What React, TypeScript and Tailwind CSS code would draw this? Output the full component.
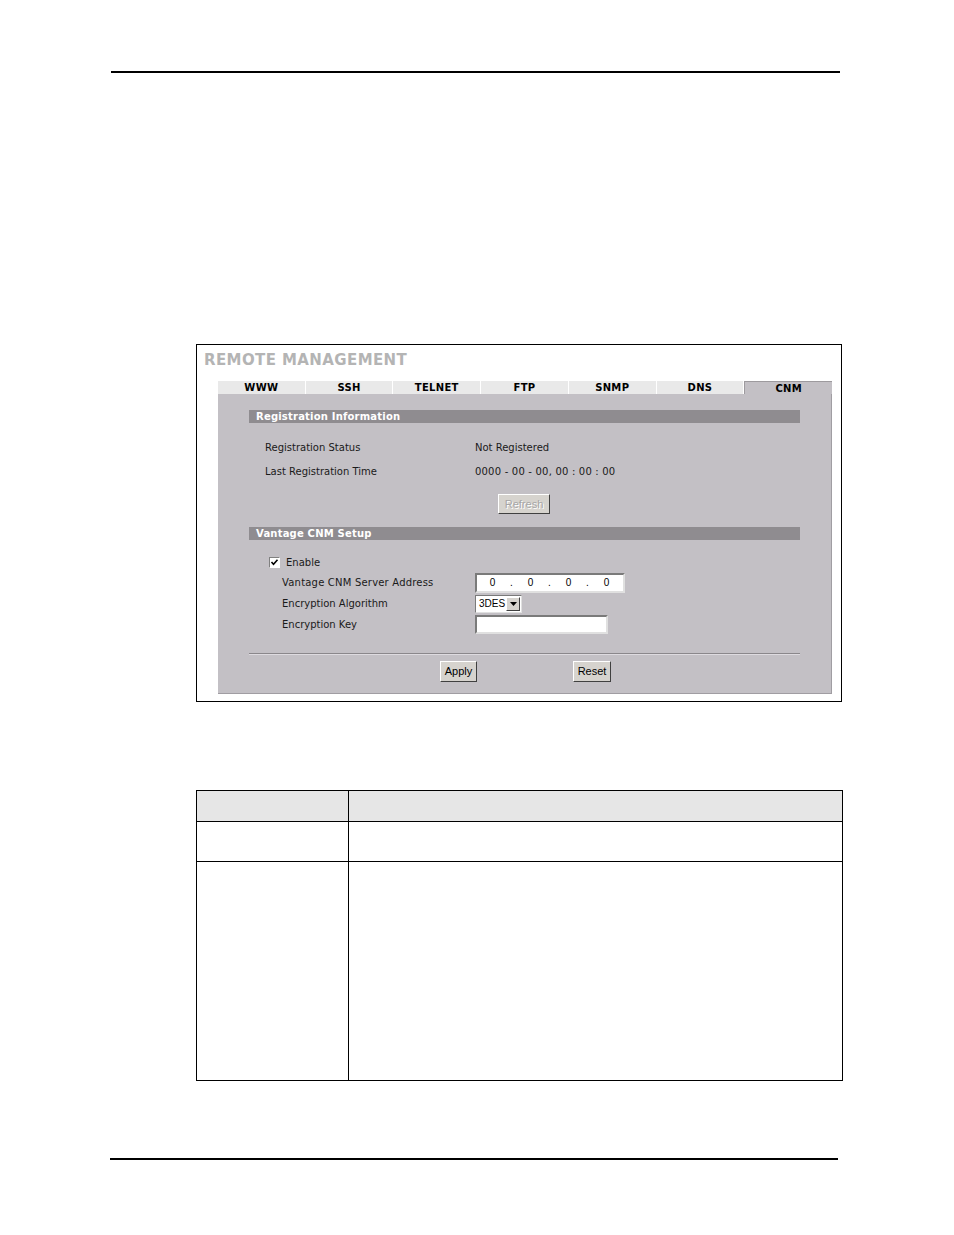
import React from "react";

const TABS = ["WWW", "SSH", "TELNET", "FTP", "SNMP", "DNS", "CNM"];
const IP_PARTS = ["0", ".", "0", ".", "0", ".", "0"];

function WinButton({ label, disabled, w }: { label: string; disabled?: boolean; w: string }) {
  return (
    <div
      className={`${w} h-full flex items-center justify-center bg-[#d6d3ce] border border-t-white border-l-white border-r-[#404040] border-b-[#404040] text-[11px] font-['Liberation_Sans',sans-serif] ${
        disabled ? "text-[#a6a6a6] [text-shadow:1px_1px_0_#ffffff]" : "text-black"
      }`}
    >
      {label}
    </div>
  );
}

function SectionBar({ title }: { title: string }) {
  return (
    <div className="h-[13px] bg-[#8f8c90] pl-[7px] flex items-center text-[10px] font-bold text-white tracking-[0.2px]">
      {title}
    </div>
  );
}

function RemoteManagement() {
  return (
    <div className="ml-[196px] mt-[271px] w-[646px] h-[358px] border border-black bg-white flex flex-col">
      <div className="h-[36px] pl-[7px] pt-[4px] text-[15px] font-bold text-[#b4b4b4] tracking-[0.4px] font-['DejaVu_Sans',sans-serif]">
        REMOTE MANAGEMENT
      </div>
      <div className="ml-[21px] mr-[9px] flex flex-col font-['DejaVu_Sans',sans-serif]">
        {/* Tabs */}
        <div className="h-[13px] flex">
          {TABS.map((t) => (
            <div
              key={t}
              className={`flex-1 flex items-center justify-center text-[10px] font-bold text-black tracking-[0.3px] border-r border-white last:border-r-0 ${
                t === "CNM" ? "bg-[#c3c0c5] border-t border-t-[#9d9a9e] border-l border-l-[#9d9a9e]" : "bg-[#e9e9e9]"
              }`}
            >
              {t}
            </div>
          ))}
        </div>
        {/* Panel */}
        <div className="h-[300px] bg-[#c3c0c5] border-r border-b border-[#a09da2] pt-[16px] px-[31px] flex flex-col text-[10px] text-[#1a1a1a]">
          <SectionBar title="Registration Information" />
          <div className="mt-[12px] h-[24px] flex items-center">
            <div className="ml-[16px] w-[210px]">Registration Status</div>
            <div>Not Registered</div>
          </div>
          <div className="h-[24px] flex items-center">
            <div className="ml-[16px] w-[210px]">Last Registration Time</div>
            <div className="tracking-[0.2px]">0000 - 00 - 00, 00 : 00 : 00</div>
          </div>
          <div className="mt-[11px] h-[20px] flex">
            <div className="ml-[249px] h-full">
              <WinButton label="Refresh" disabled w="w-[52px]" />
            </div>
          </div>
          <div className="mt-[13px]">
            <SectionBar title="Vantage CNM Setup" />
          </div>
          <div className="mt-[12px] h-[20px] flex items-center">
            <div className="ml-[20px] w-[11px] h-[11px] bg-white border border-t-[#808080] border-l-[#808080] border-r-white border-b-white flex items-center justify-center">
              <svg viewBox="0 0 9 9" className="w-[9px] h-[9px]">
                <path d="M1.5 4 L3.5 6.2 L7.5 1.8" stroke="black" strokeWidth="1.6" fill="none" />
              </svg>
            </div>
            <div className="ml-[6px]">Enable</div>
          </div>
          <div className="h-[21px] flex items-center">
            <div className="ml-[33px] w-[193px] tracking-[0.2px]">Vantage CNM Server Address</div>
            <div className="w-[150px] h-[20px] bg-white border-2 border-t-[#7a7a7a] border-l-[#7a7a7a] border-r-[#e0e0e0] border-b-[#e0e0e0] flex items-center text-[10px] font-['Liberation_Sans',sans-serif] text-black">
              <div className="ml-[6px] flex">
                {IP_PARTS.map((p, i) => (
                  <span key={i} className="w-[19px] text-center">
                    {p}
                  </span>
                ))}
              </div>
            </div>
          </div>
          <div className="h-[21px] flex items-center">
            <div className="ml-[33px] w-[193px]">Encryption Algorithm</div>
            <div className="w-[47px] h-[18px] bg-white border border-t-[#7a7a7a] border-l-[#7a7a7a] border-r-[#e0e0e0] border-b-[#e0e0e0] flex items-center text-[10px] font-['Liberation_Sans',sans-serif] text-black">
              <span className="ml-[3px] flex-1">3DES</span>
              <div className="w-[14px] h-[14px] mr-[1px] bg-[#d6d3ce] border border-t-white border-l-white border-r-[#404040] border-b-[#404040] flex items-center justify-center">
                <svg viewBox="0 0 7 4" className="w-[7px] h-[4px]">
                  <path d="M0 0 H7 L3.5 4 Z" fill="black" />
                </svg>
              </div>
            </div>
          </div>
          <div className="h-[21px] flex items-center">
            <div className="ml-[33px] w-[193px]">Encryption Key</div>
            <div className="w-[133px] h-[19px] bg-white border-2 border-t-[#7a7a7a] border-l-[#7a7a7a] border-r-[#e0e0e0] border-b-[#e0e0e0]" />
          </div>
          <div className="mt-[18px] h-[2px] border-t border-t-[#8a878b] border-b border-b-[#dedbe0]" />
          <div className="mt-[6px] h-[21px] flex">
            <div className="ml-[191px] h-full">
              <WinButton label="Apply" w="w-[37px]" />
            </div>
            <div className="ml-[96px] h-full">
              <WinButton label="Reset" w="w-[38px]" />
            </div>
          </div>
        </div>
      </div>
    </div>
  );
}

function DescTable() {
  return (
    <div className="ml-[196px] mt-[88px] w-[647px] border-[1.5px] border-black flex flex-col">
      <div className="h-[31px] flex bg-[#e6e6e6] border-b-[1.5px] border-black">
        <div className="w-[152px] border-r-[1.5px] border-black" />
        <div className="flex-1" />
      </div>
      <div className="h-[40px] flex border-b-[1.5px] border-black">
        <div className="w-[152px] border-r-[1.5px] border-black" />
        <div className="flex-1" />
      </div>
      <div className="h-[218px] flex">
        <div className="w-[152px] border-r-[1.5px] border-black" />
        <div className="flex-1" />
      </div>
    </div>
  );
}

export default function App() {
  return (
    <div className="w-[954px] h-[1235px] bg-white flex flex-col overflow-hidden">
      <div className="ml-[111px] mt-[71px] w-[729px] h-[2px] bg-black" />
      <RemoteManagement />
      <DescTable />
      <div className="ml-[110px] mt-[77px] w-[728px] h-[2px] bg-black" />
    </div>
  );
}
